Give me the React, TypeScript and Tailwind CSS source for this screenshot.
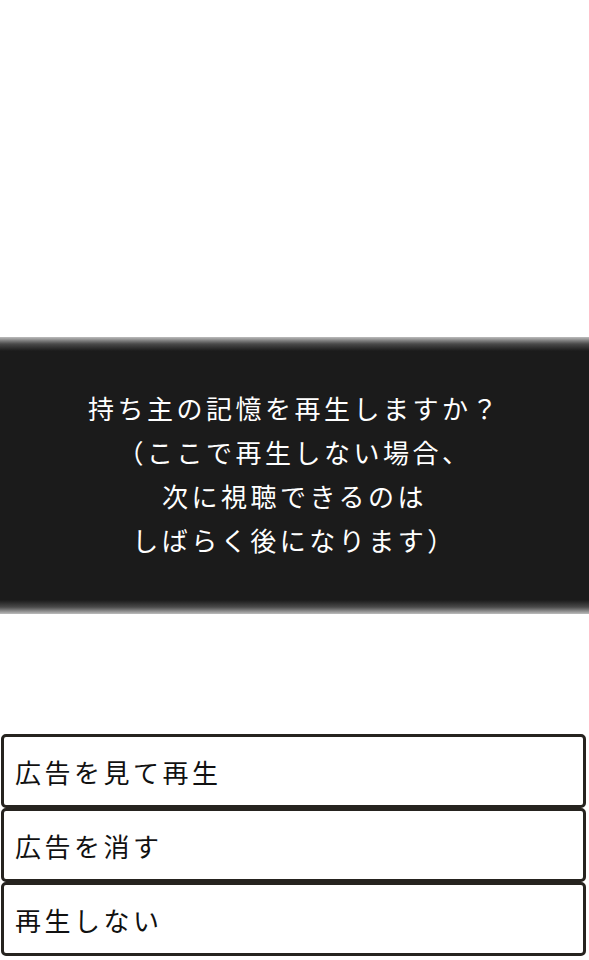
import React from 'react';

const choices = ['広告を見て再生', '広告を消す', '再生しない'];

function App() {
  return (
    <div
      className="h-[960px] w-[589px] overflow-hidden bg-white flex flex-col"
      style={{ fontFamily: '"Noto Sans CJK JP", "Noto Sans", sans-serif' }}
    >
      <div className="h-[337px] shrink-0" />

      {/* message band */}
      <div className="h-[277px] shrink-0 flex flex-col bg-[#1b1b1b]">
        <div className="h-[14px] bg-gradient-to-b from-[#bdbdbd] via-[#4a4a4a] to-[#1b1b1b]" />
        <div className="flex-1 flex flex-col items-center justify-center pb-[4px] text-white text-[26px] leading-[44px] tracking-[3.5px]">
          <p>持ち主の記憶を再生しますか？</p>
          <p>（ここで再生しない場合、</p>
          <p>次に視聴できるのは</p>
          <p>しばらく後になります）</p>
        </div>
        <div className="h-[14px] bg-gradient-to-b from-[#1b1b1b] via-[#4a4a4a] to-[#bdbdbd]" />
      </div>

      <div className="h-[120px] shrink-0" />

      {/* choice buttons */}
      <div className="flex flex-col pl-[1px] pr-[3px]">
        {choices.map((label) => (
          <button
            key={label}
            className="h-[74px] border-[3px] border-[#26231f] rounded-[5px] bg-white text-left pl-[11px] text-[26px] tracking-[3.5px] text-[#111]"
          >
            {label}
          </button>
        ))}
      </div>
    </div>
  );
}

export default App;
